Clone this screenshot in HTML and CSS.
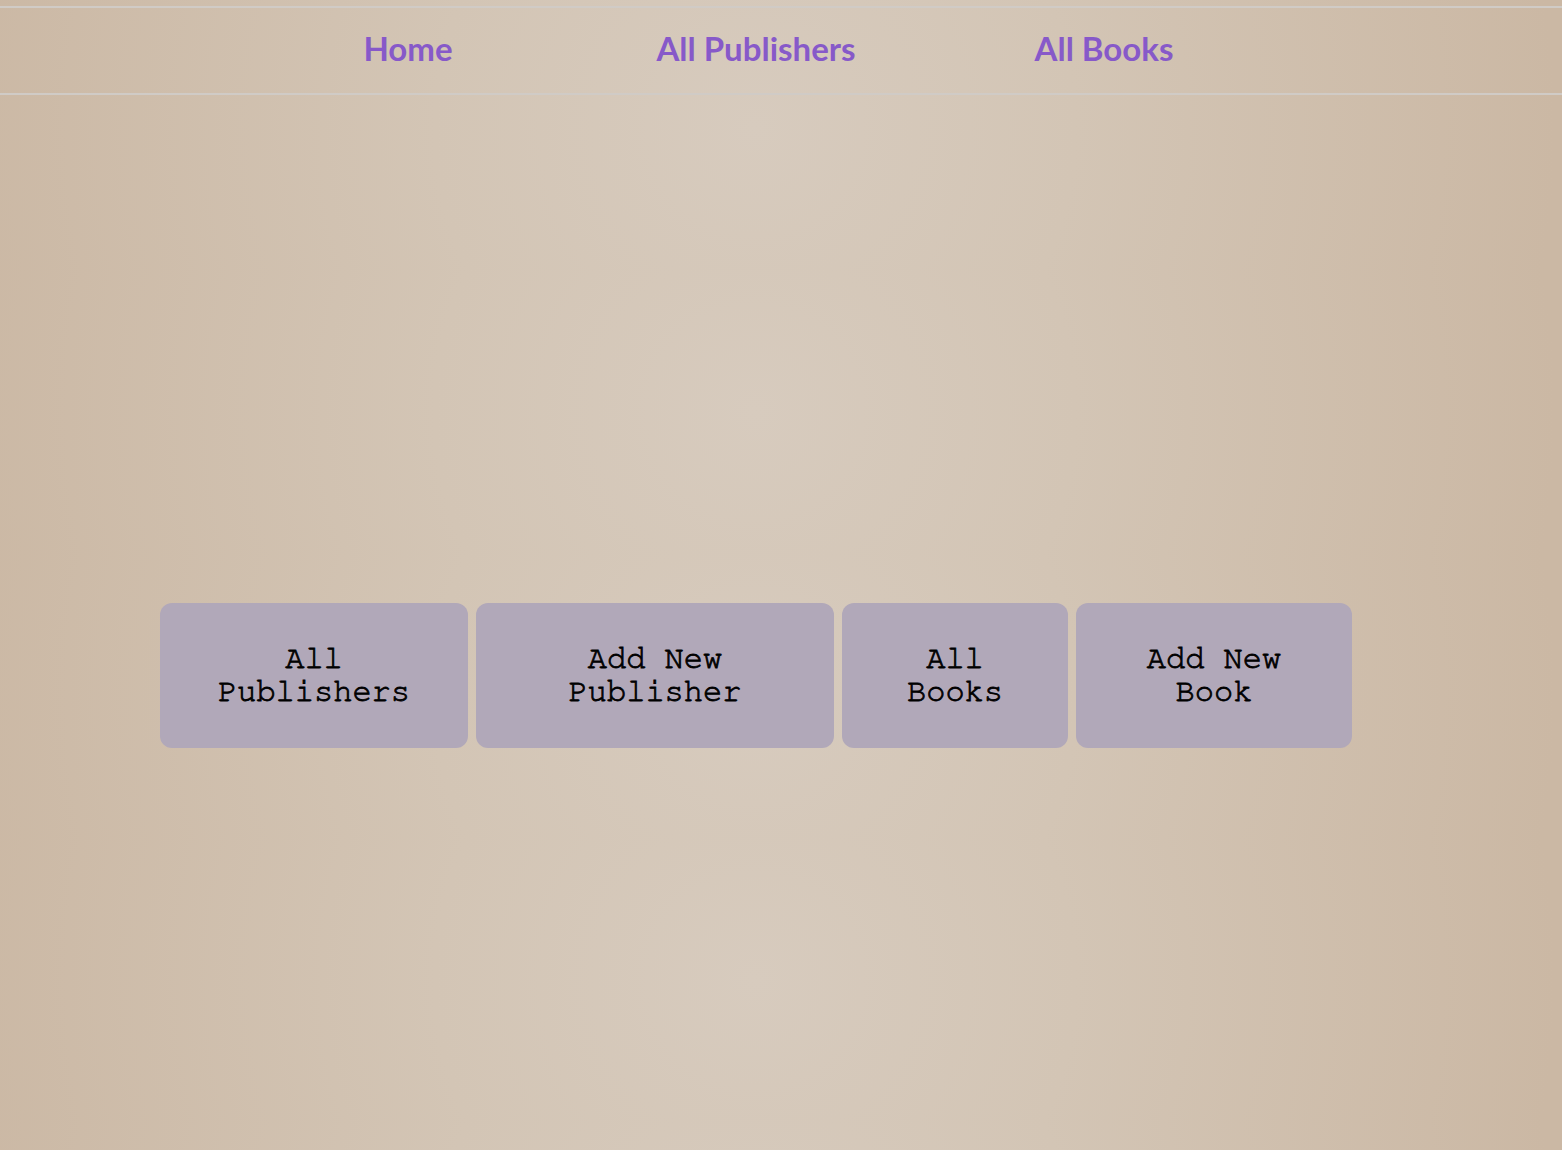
FILE: index.html
```html
<!DOCTYPE html>
<html lang="en">
<head>
<meta charset="utf-8">
<title>Library</title>
<link rel="stylesheet" href="styles.css">
</head>
<body>
  <nav class="nav">
    <div class="nav-inner">
      <a class="nav-link" href="#">Home</a>
      <a class="nav-link" href="#">All Publishers</a>
      <a class="nav-link" href="#">All Books</a>
    </div>
  </nav>
  <main class="actions">
    <a class="action" href="#">All<br>Publishers</a>
    <a class="action" href="#">Add New<br>Publisher</a>
    <a class="action" href="#">All<br>Books</a>
    <a class="action" href="#">Add New<br>Book</a>
  </main>
</body>
</html>
```
FILE: styles.css
```css
html {
  margin: 0;
  min-height: 100%;
  background-color: #d0c0ae;
  background-image: radial-gradient(circle 800px at 755px 50%, #d7cbbe 0%, #d3c5b5 40%, #cbb8a4 100%);
  background-size: 100% 284px;
  background-position: 0 -14px;
  background-repeat: repeat;
}

body {
  margin: 0;
  font-family: "Lato", "Liberation Sans", sans-serif;
}

.nav {
  margin-top: 6px;
  border-top: 2px solid #d0cbc6;
  border-bottom: 2px solid #d0cbc6;
  padding: 21px 0 25px;
}

.nav-inner {
  width: 1512px;
  display: grid;
  grid-template-columns: repeat(3, 348px);
  justify-content: center;
}

.nav-link {
  text-align: center;
  font-size: 33px;
  font-weight: 700;
  line-height: 39px;
  color: #8759c9;
  text-decoration: none;
}

.actions {
  width: 1512px;
  margin-top: 508px;
  display: grid;
  grid-template-columns: 308px 358px 226px 276px;
  gap: 8px;
  justify-content: center;
}

.action {
  box-sizing: border-box;
  height: 145px;
  padding: 39px 0 40px;
  background: #b1a8b9;
  border-radius: 12px;
  text-align: center;
  font-family: "Nimbus Mono PS", "Nimbus Mono L", "FreeMono", "Liberation Mono", "Courier New", monospace;
  font-size: 32px;
  font-weight: 400;
  -webkit-text-stroke: 0.8px #000;
  line-height: 33px;
  color: #000;
  text-decoration: none;
}
```
